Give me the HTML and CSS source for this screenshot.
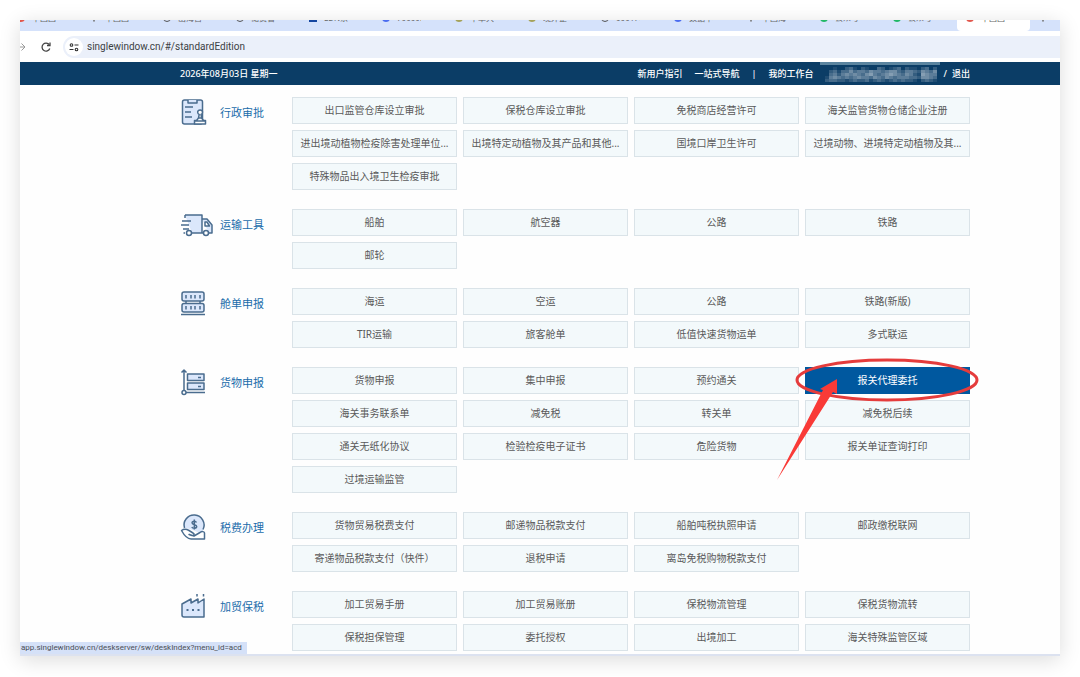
FILE: index.html
```html
<!DOCTYPE html>
<html lang="zh-CN">
<head>
    <meta charset="UTF-8">
    <meta name="viewport" content="width=device-width, initial-scale=1.0">
    <title>标准版应用</title>
    <link rel="stylesheet" href="styles.css">
</head>
<body>
    <div class="window">
        <div class="tabs">
            <div class="tab"><i class="fav red"></i><span>中国国际</span><b>×</b></div>
            <div class="tab"><i class="fav grey"></i><span>中国国际</span><b>×</b></div>
            <div class="tab"><i class="fav ring"></i><span>出海营销</span><b>×</b></div>
            <div class="tab"><i class="fav ring"></i><span>储货管理</span><b>×</b></div>
            <div class="tab"><i class="fav navy"></i><span>LDN系</span><b>×</b></div>
            <div class="tab"><i class="fav blue"></i><span>70000.</span><b>×</b></div>
            <div class="tab"><i class="fav olive"></i><span>千单大厅</span><b>×</b></div>
            <div class="tab"><i class="fav olive"></i><span>境外企业</span><b>×</b></div>
            <div class="tab"><i class="fav ring"></i><span>000177</span><b>×</b></div>
            <div class="tab"><i class="fav blue"></i><span>数据中心</span><b>×</b></div>
            <div class="tab"><i class="fav grey"></i><span>中国海关</span><b>×</b></div>
            <div class="tab"><i class="fav green"></i><span>公众号</span><b>×</b></div>
            <div class="tab"><i class="fav green"></i><span>公众号</span><b>×</b></div>
            <div class="tab active"><i class="fav red"></i><span>中国国际</span><b>×</b></div>
            <div class="tab"><i class="fav grey"></i></div>
        </div>

        <div class="toolbar">
            <svg class="forward" viewBox="0 0 6 10" fill="none" stroke="#999" stroke-width="1">
                <path d="M0 5h5M1.500 1.500L5 5 1.500 8.500"></path>
            </svg>
            <button class="reload" aria-label="重新加载">
                <svg viewBox="0 0 12 12" fill="none" stroke="#444" stroke-width="1.300">
                    <path d="M9.800 7.500A4 4 0 1 1 9.300 3.700"></path>
                    <path d="M10 1.500v3H7"></path>
                </svg>
            </button>
            <label class="address">
                <span class="site">
                    <svg viewBox="0 0 10 10" fill="none" stroke="#333" stroke-width="1.100">
                        <circle cx="2.500" cy="3" r="1.300"></circle>
                        <path d="M5.500 3H9.500M0.500 7.500H4.500"></path>
                        <circle cx="7.500" cy="7.500" r="1.300"></circle>
                    </svg>
                </span>
                <input type="text" aria-label="地址" value="singlewindow.cn/#/standardEdition">
            </label>
        </div>

        <div class="topbar">
            <div class="inner">
                <span class="date">2026年08月03日 星期一</span>
                <a href="#">新用户指引</a>
                <a href="#">一站式导航</a>
                <span class="bar">|</span>
                <a href="#">我的工作台</a>
                <svg class="mosaic" viewBox="0 0 120 23">
                    <rect width="120" height="3" fill="#5b849f"></rect>
                    <g class="blocks"></g>
                </svg>
                <span class="slash">/</span>
                <a href="#">退出</a>
            </div>
        </div>

        <div class="content">
            <div class="section">
                <h2>
                    <svg viewBox="0 0 34 28">
                        <rect x="2.500" y="2" width="20" height="24" rx="2"></rect>
                        <path d="M8 2v3h9V2M5 9h8M5 14h6M5 19h7"></path>
                        <path class="white" d="M14.500 26v-3.500h2l2-2.500h3l2 2.500h2V26zM18.500 20l.7-3.500a2.400 2.400 0 1 1 1.800 0l.7 3.500M14.500 23h11"></path>
                    </svg>
                    行政审批
                </h2>
                <div class="links">
                    <a href="#">出口监管仓库设立审批</a>
                    <a href="#">保税仓库设立审批</a>
                    <a href="#">免税商店经营许可</a>
                    <a href="#">海关监管货物仓储企业注册</a>
                    <a href="#">进出境动植物检疫除害处理单位...</a>
                    <a href="#">出境特定动植物及其产品和其他...</a>
                    <a href="#">国境口岸卫生许可</a>
                    <a href="#">过境动物、进境特定动植物及其...</a>
                    <a href="#">特殊物品出入境卫生检疫审批</a>
                </div>
            </div>

            <div class="section">
                <h2>
                    <svg viewBox="0 0 34 28">
                        <path d="M5 5h17v18H12M5 23H3.500M22 9h5l5 6v8h-3M22 23h2M5 5v3M2 11h9M1 15h8M3 19h6"></path>
                        <path class="white" d="M25 12h2l2.500 4H25z"></path>
                        <circle class="white" cx="9" cy="23" r="2.500"></circle>
                        <circle class="white" cx="26" cy="23" r="2.500"></circle>
                    </svg>
                    运输工具
                </h2>
                <div class="links">
                    <a href="#">船舶</a>
                    <a href="#">航空器</a>
                    <a href="#">公路</a>
                    <a href="#">铁路</a>
                    <a href="#">邮轮</a>
                </div>
            </div>

            <div class="section">
                <h2>
                    <svg viewBox="0 0 34 28">
                        <rect x="2" y="3" width="22" height="9" rx="2"></rect>
                        <rect x="2" y="14.500" width="22" height="8.500" rx="2"></rect>
                        <path d="M6 12v2.500M20 12v2.500M1 25.500h24M6 6v3.500M11 6v3.500M15 6v3.500M20 6v3.500M6 17v3.500M11 17v3.500M15 17v3.500M20 17v3.500"></path>
                    </svg>
                    舱单申报
                </h2>
                <div class="links">
                    <a href="#">海运</a>
                    <a href="#">空运</a>
                    <a href="#">公路</a>
                    <a href="#">铁路(新版)</a>
                    <a href="#">TIR运输</a>
                    <a href="#">旅客舱单</a>
                    <a href="#">低值快速货物运单</a>
                    <a href="#">多式联运</a>
                </div>
            </div>

            <div class="section">
                <h2>
                    <svg viewBox="0 0 34 28">
                        <rect x="7.500" y="6" width="16.500" height="6.500"></rect>
                        <rect x="7.500" y="15" width="16.500" height="6.500"></rect>
                        <path d="M4 22V3M1.500 4.500L4 2l2.500 2.500M6 24.500h19M18 9.500h3M18 18.500h3"></path>
                        <circle class="white" cx="4" cy="24.500" r="2"></circle>
                    </svg>
                    货物申报
                </h2>
                <div class="links">
                    <a href="#">货物申报</a>
                    <a href="#">集中申报</a>
                    <a href="#">预约通关</a>
                    <a href="#" class="current">报关代理委托
                        <svg class="mark" viewBox="0 0 204 126">
                            <ellipse cx="110" cy="24" rx="90" ry="20"></ellipse>
                            <path d="M0 124L46 34l-3-1 17-10v15l-4-2z"></path>
                        </svg>
                    </a>
                    <a href="#">海关事务联系单</a>
                    <a href="#">减免税</a>
                    <a href="#">转关单</a>
                    <a href="#">减免税后续</a>
                    <a href="#">通关无纸化协议</a>
                    <a href="#">检验检疫电子证书</a>
                    <a href="#">危险货物</a>
                    <a href="#">报关单证查询打印</a>
                    <a href="#">过境运输监管</a>
                </div>
            </div>

            <div class="section">
                <h2>
                    <svg viewBox="0 0 34 28">
                        <path d="M4.500 15a10 10 0 1 1 18.500 2l-3 3-10-4z" stroke="none"></path>
                        <path class="line" d="M4.500 15a10 10 0 1 1 18.500 1.500"></path>
                        <path class="white" d="M1.500 17.500c2-1.500 5-1.500 7.500 0l4 2.500c2 1 1 3-1 2.500l-3-1 5 1.500 6-3.500c2-1.500 4.500-1 4.500.5V26H11c-4 0-7-4-9.500-8.500z"></path>
                        <path class="line" d="M16.500 9.500c-1-2-4.500-1.500-4.500.3 0 2.400 4.700 1.400 4.700 3.800 0 2-3.900 2.200-4.900.4M14.300 6.500v10"></path>
                    </svg>
                    税费办理
                </h2>
                <div class="links">
                    <a href="#">货物贸易税费支付</a>
                    <a href="#">邮递物品税款支付</a>
                    <a href="#">船舶吨税执照申请</a>
                    <a href="#">邮政缴税联网</a>
                    <a href="#">寄递物品税款支付（快件）</a>
                    <a href="#">退税申请</a>
                    <a href="#">离岛免税购物税款支付</a>
                </div>
            </div>

            <div class="section">
                <h2>
                    <svg viewBox="0 0 34 28">
                        <path d="M2 12l9-5v4l7-4v4l6-4v18H4c-1.500 0-2-.5-2-2z"></path>
                        <path d="M17 2v2.500M23.500 2v2.500"></path>
                        <path class="bold" d="M6.500 18h2M12 18h2M17.500 18h2"></path>
                    </svg>
                    加贸保税
                </h2>
                <div class="links">
                    <a href="#">加工贸易手册</a>
                    <a href="#">加工贸易账册</a>
                    <a href="#">保税物流管理</a>
                    <a href="#">保税货物流转</a>
                    <a href="#">保税担保管理</a>
                    <a href="#">委托授权</a>
                    <a href="#">出境加工</a>
                    <a href="#">海关特殊监管区域</a>
                </div>
            </div>
        </div>

        <div class="status">app.singlewindow.cn/deskserver/sw/deskIndex?menu_id=acd</div>
    </div>

    <script src="script.js"></script>
</body>
</html>
```
FILE: styles.css
```css
* {
    margin: 0;
    padding: 0;
    box-sizing: border-box;
}

body {
    padding: 20px;
    background: #fff;
    font-family: "Noto Sans", "Noto Sans CJK SC", sans-serif;
}

.window {
    position: relative;
    background: #fefefe;
    box-shadow: 0 4px 20px rgba(0, 0, 0, 0.14);
    border-bottom: 2px solid #dce2f0;
}

/* browser chrome */
.tabs {
    display: flex;
    align-items: flex-end;
    height: 11px;
    overflow: hidden;
    background: #d5e2fb;
}

.tab {
    flex: 0 0 73px;
    display: flex;
    align-items: center;
    height: 24px;
    padding: 0 8px 2px 9px;
    color: #666;
    font-size: 8px;
    line-height: 12px;
}

.tab:first-child {
    margin-left: -12px;
}

.tab span {
    width: 24px;
    margin-left: 7px;
    overflow: hidden;
    white-space: nowrap;
}

.tab b {
    margin-left: auto;
    font-weight: normal;
}

.tab.active {
    background: #fff;
    border-radius: 0 0 4px 4px;
}

.fav {
    width: 8px;
    height: 8px;
    border-radius: 50%;
}

.red { border: 2px solid #e2574c; }
.grey { width: 2px; margin: 0 3px; background: #777; }
.ring { border: 1px solid #555; }
.navy { border-radius: 0; background: #1546a0; }
.blue { background: #4a6cf0; }
.olive { border: 2px solid #a5a25a; }
.green { background: #20b866; }

.toolbar {
    display: flex;
    align-items: center;
    height: 31px;
    background: #fff;
}

.forward {
    width: 6px;
    height: 10px;
}

.reload {
    width: 12px;
    height: 12px;
    margin: 0 11px 0 14px;
    border: none;
    background: none;
}

.reload svg {
    display: block;
}

.address {
    flex: 1;
    display: flex;
    align-items: center;
    height: 22px;
    padding-left: 2px;
    border-radius: 11px 0 0 11px;
    background: #ebf0fa;
}

.site {
    display: flex;
    align-items: center;
    justify-content: center;
    width: 18px;
    height: 18px;
    border-radius: 50%;
    background: #fff;
}

.site svg {
    width: 10px;
    height: 10px;
}

.address input {
    flex: 1;
    margin-left: 4px;
    border: none;
    outline: none;
    background: none;
    color: #3c3f44;
    font-family: Roboto, sans-serif;
    font-size: 10px;
}

/* site header */
.topbar {
    background: #0b3d66;
    color: #fff;
    font-size: 9px;
    font-weight: 500;
    line-height: 23px;
}

.inner,
.content {
    margin: 0 90px 0 160px;
}

.inner {
    display: flex;
    height: 23px;
}

.inner a {
    margin-left: 12px;
    color: #fff;
    text-decoration: none;
}

.date {
    margin-right: auto;
}

.bar {
    margin-left: 12px;
}

.mosaic {
    width: 120px;
    height: 23px;
    margin-left: 6px;
}

.slash {
    margin-left: 4px;
}

.slash + a {
    margin-left: 5px;
}

/* application list */
.content {
    padding: 12px 0 3px;
}

.section {
    display: flex;
    margin-bottom: 19px;
}

.section:last-child {
    margin-bottom: 0;
}

.section h2 {
    flex: 0 0 112px;
    display: flex;
    align-items: center;
    gap: 6px;
    height: 30px;
    color: #1a6cab;
    font-size: 11px;
    font-weight: normal;
}

.section h2 svg {
    width: 34px;
    height: 28px;
    fill: #dbe7fb;
    stroke: #4a6c8e;
    stroke-width: 1.5;
    stroke-linejoin: round;
}

.section h2 .white {
    fill: #fff;
}

.section h2 .line {
    fill: none;
}

.section h2 .bold {
    fill: none;
    stroke-width: 2;
}

.links {
    flex: 1;
    display: grid;
    grid-template-columns: repeat(4, 1fr);
    gap: 6px;
}

.links a {
    position: relative;
    height: 27px;
    border: 1px solid #dae3e8;
    background: #f3f9fb;
    color: #5a5a5a;
    font-size: 10px;
    line-height: 25px;
    text-align: center;
    text-decoration: none;
    white-space: nowrap;
}

.links .current {
    border-color: #00589f;
    background: #00589f;
    color: #fff;
}

.mark {
    position: absolute;
    z-index: 1;
    top: -12px;
    right: -12px;
    width: 204px;
    height: 126px;
    fill: #f93a37;
    pointer-events: none;
}

.mark ellipse {
    fill: none;
    stroke: #e53c3c;
    stroke-width: 3;
}

.status {
    position: absolute;
    left: 0;
    bottom: 0;
    height: 12px;
    padding: 0 5px 0 1px;
    background: #d5e1f8;
    color: #4b4f57;
    font-family: Roboto, sans-serif;
    font-size: 8px;
    line-height: 12px;
}
```
FILE: script.js
```js
// pixelated company name in the header, one row of opacities per line
const rows = [
    '0010023102100320123021102302',
    '0231335344354434553244325435',
    '0342454543564345654354216544',
    '1454343454435435434443325543',
    '2332212322312321232322102321'
];
const blocks = document.querySelector('.blocks');

rows.forEach((row, y) => {
    [...row].forEach((level, x) => {
        const rect = document.createElementNS('http://www.w3.org/2000/svg', 'rect');
        rect.setAttribute('x', 5 + x * 4);
        rect.setAttribute('y', 5 + y * 3);
        rect.setAttribute('width', 4);
        rect.setAttribute('height', 3);
        rect.setAttribute('fill', '#fff');
        rect.setAttribute('fill-opacity', level / 12);
        blocks.appendChild(rect);
    });
});
```
